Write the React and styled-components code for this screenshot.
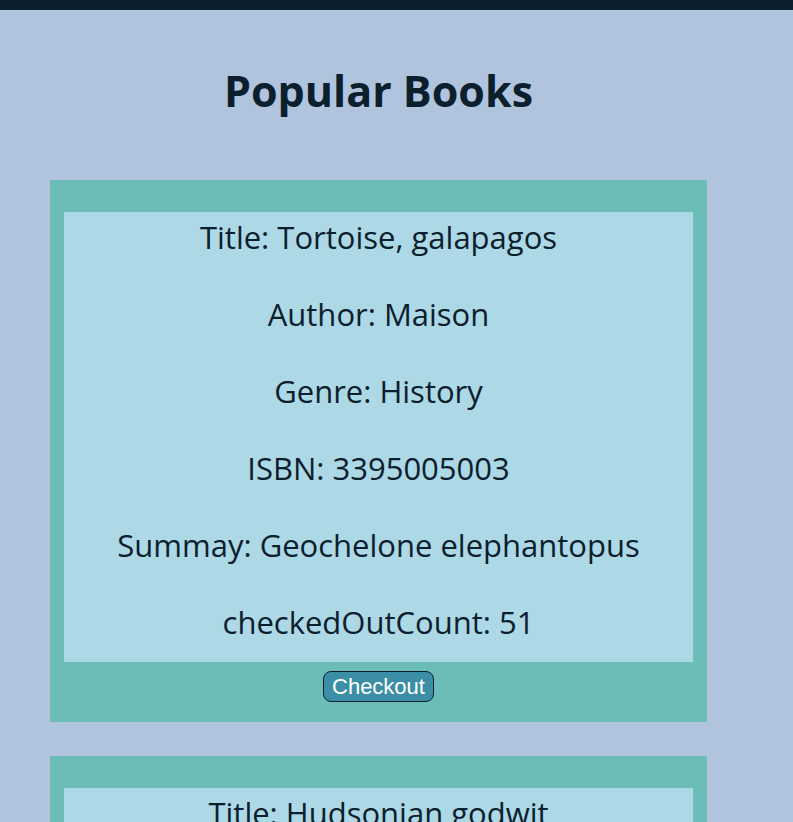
import styled, { createGlobalStyle } from "styled-components";

const GlobalStyle = createGlobalStyle`
    body {
        margin: 0;
        background: #b0c4de;
        color: #0b202c;
        font-family: "Open Sans", "Noto Sans", sans-serif;
    }
`;

const TopBar = styled.div`
    height: 10px;
    background: #0b202c;
`;

const Page = styled.main`
    width: 657px;
    margin-left: 50px;
    display: flex;
    flex-direction: column;
    gap: 34px;
`;

const Heading = styled.h1`
    margin: 0;
    padding-top: 51px;
    padding-bottom: 25px;
    text-align: center;
    font-size: 43px;
    font-weight: 700;
    line-height: 60px;
`;

const Card = styled.section`
    background: #6cbdb7;
    padding: 32px 14px 20px;
    display: flex;
    flex-direction: column;
    align-items: center;
    gap: 9px;
`;

const Details = styled.div`
    align-self: stretch;
    background: #add8e6;
    padding: 5px 0 20px;
    display: flex;
    flex-direction: column;
    gap: 37px;
`;

const Field = styled.p`
    margin: 0;
    text-align: center;
    font-size: 31px;
    line-height: 40px;
`;

const CheckoutButton = styled.button`
    font-family: "Liberation Sans", Arial, sans-serif;
    font-size: 22px;
    color: #fff;
    background: #3b8ea5;
    border: 1px solid #0b202c;
    border-radius: 8px;
    padding: 1px 8px;
    line-height: 27px;
    cursor: pointer;
`;

const books = [
    {
        title: "Tortoise, galapagos",
        author: "Maison",
        genre: "History",
        isbn: "3395005003",
        summary: "Geochelone elephantopus",
        checkedOutCount: 51,
    },
    {
        title: "Hudsonian godwit",
        author: "Chaim",
        genre: "Drama",
        isbn: "2174506931",
        summary: "Limosa haemastica",
        checkedOutCount: 47,
    },
];

function BookCard({ book }) {
    return (
        <Card>
            <Details>
                <Field>Title: {book.title}</Field>
                <Field>Author: {book.author}</Field>
                <Field>Genre: {book.genre}</Field>
                <Field>ISBN: {book.isbn}</Field>
                <Field>Summay: {book.summary}</Field>
                <Field>checkedOutCount: {book.checkedOutCount}</Field>
            </Details>
            <CheckoutButton>Checkout</CheckoutButton>
        </Card>
    );
}

export default function App() {
    return (
        <>
            <GlobalStyle />
            <TopBar />
            <Page>
                <Heading>Popular Books</Heading>
                {books.map((book) => (
                    <BookCard key={book.isbn} book={book} />
                ))}
            </Page>
        </>
    );
}
